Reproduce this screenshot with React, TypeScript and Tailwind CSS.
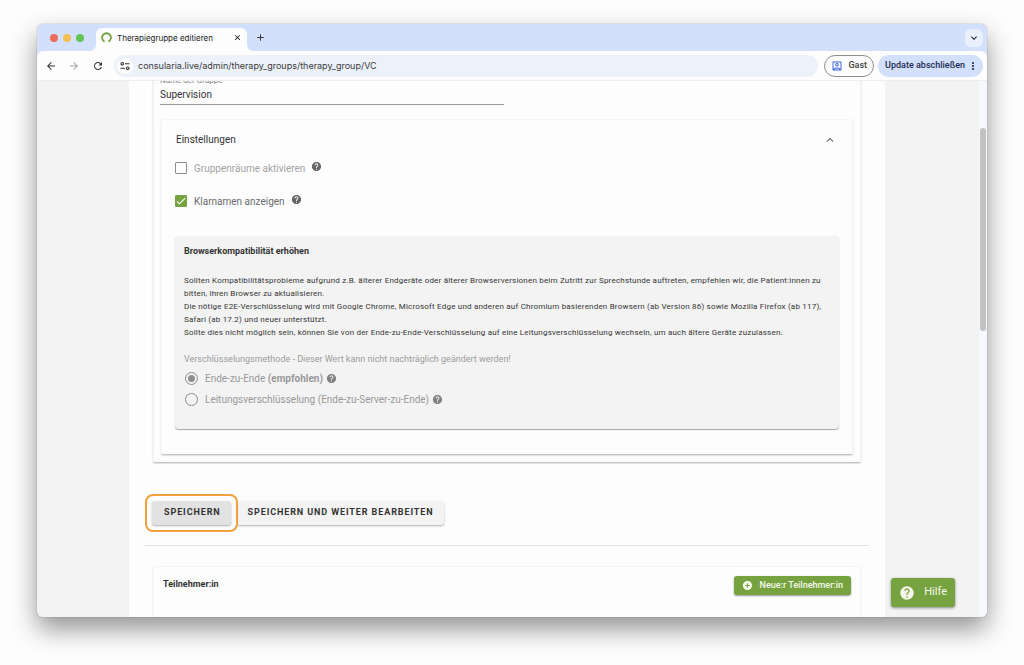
import { useState } from "react";
import {
  MdAddCircle,
  MdArrowBack,
  MdArrowForward,
  MdCheck,
  MdClose,
  MdHelp,
  MdKeyboardArrowDown,
  MdKeyboardArrowUp,
  MdMoreVert,
  MdOutlineAccountBox,
  MdAdd,
  MdRefresh,
} from "react-icons/md";

const TabStrip = () => (
  <div className="flex h-[27px] items-end bg-[#d3e0fb] pl-[13px] pr-1 font-['Inter',sans-serif]">
    <div className="flex gap-[5px] self-center">
      <span className="h-2 w-2 rounded-full bg-[#ed6a5e]"></span>
      <span className="h-2 w-2 rounded-full bg-[#f4bf4f]"></span>
      <span className="h-2 w-2 rounded-full bg-[#61c454]"></span>
    </div>

    <svg viewBox="0 0 6 6" className="ml-[6px] h-[6px] w-[6px]" fill="#fdfdfd">
      <path d="M6 0V6H0A6 6 0 0 0 6 0Z" />
    </svg>
    <div className="flex h-[23px] w-[151px] items-center rounded-t-md bg-[#fdfdfd] pl-[5px] pr-1 pb-1">
      <svg viewBox="0 0 20 20" className="h-[11px] w-[11px]" fill="none" stroke="#76a240" strokeWidth="3.4">
        <path d="M6.5 17.5A8 8 0 1 1 13.5 17.5" />
      </svg>
      <span className="ml-[5px] flex-1 truncate text-[8px] leading-3 text-[#222]">
        Therapiegruppe editieren
      </span>
      <button aria-label="Tab schließen" className="p-px">
        <MdClose className="h-[9px] w-[9px] text-[#111]" />
      </button>
    </div>
    <svg viewBox="0 0 6 6" className="h-[6px] w-[6px]" fill="#fdfdfd">
      <path d="M0 0V6H6A6 6 0 0 1 0 0Z" />
    </svg>

    <button aria-label="Neuer Tab" className="ml-[2px] self-center">
      <MdAdd className="h-[11px] w-[11px] text-[#333]" />
    </button>

    <button
      aria-label="Tabs durchsuchen"
      className="ml-auto flex h-[18px] w-[18px] items-center justify-center self-center rounded-md bg-[#eaf0fb]"
    >
      <MdKeyboardArrowDown className="h-3 w-3 text-[#222]" />
    </button>
  </div>
);

const Toolbar = () => (
  <div className="bg-[#d3e0fb]">
    <div className="flex h-[30px] items-center rounded-t-md border-b border-[#eeeeee] bg-[#fdfdfd] pl-2 pr-1">
      <button aria-label="Zurück">
        <MdArrowBack className="h-3 w-3 text-[#333]" />
      </button>
      <button aria-label="Vorwärts" className="ml-[11px]">
        <MdArrowForward className="h-3 w-3 text-[#a5a5a5]" />
      </button>
      <button aria-label="Neu laden" className="ml-3">
        <MdRefresh className="h-3 w-3 text-[#333]" />
      </button>

      <div className="ml-[10px] flex h-[22px] flex-1 items-center rounded-full bg-[#edf2fa] pl-[3px]">
        <span className="flex h-4 w-4 items-center justify-center rounded-full bg-[#fdfdfd]">
          <svg viewBox="0 0 20 20" className="h-[10px] w-[10px]" fill="none" stroke="#333" strokeWidth="2.2">
            <circle cx="4.5" cy="5.5" r="2.6" />
            <path d="M10 5.5h9M1 14.5h9" />
            <circle cx="15.5" cy="14.5" r="2.6" />
          </svg>
        </span>
        <input
          aria-label="Adresse"
          readOnly
          value="consularia.live/admin/therapy_groups/therapy_group/VC"
          className="ml-[5px] min-w-0 flex-1 bg-transparent font-['Inter',sans-serif] text-[9px] leading-4 text-[#3a3a3a] outline-none"
        />
      </div>

      <button className="ml-[6px] flex h-[22px] items-center gap-[5px] rounded-full border border-[#8e8e8e] px-[6px] text-[9px] font-medium text-[#444]">
        <MdOutlineAccountBox className="h-3 w-3 text-[#3f67d8]" />
        Gast
      </button>
      <button className="ml-1 flex h-[22px] items-center gap-[2px] rounded-full bg-[#d3e0fb] pl-[7px] pr-1 text-[9px] font-medium text-[#1c2b52]">
        Update abschließen
        <MdMoreVert className="h-3 w-3" />
      </button>
    </div>
  </div>
);

const Settings = () => {
  const [rooms, setRooms] = useState(false);
  const [realNames, setRealNames] = useState(true);
  const [method, setMethod] = useState("e2e");

  const radioClass =
    "h-[13px] w-[13px] appearance-none rounded-full border border-[#8f8f8f] bg-[#f3f3f3] checked:bg-[#8f8f8f] checked:bg-clip-content checked:p-[2px]";

  return (
    <section className="mt-[14px] rounded-sm border border-x-2 border-[#f4f5f9] border-b-[#c4c4c4] px-[13px] pb-[25px] shadow-[0_1px_1px_rgba(0,0,0,0.12)]">
      <button className="flex h-[38px] w-full items-center justify-between pl-px pr-[2px] pt-px text-[10px] text-[#333]">
        <span>Einstellungen</span>
        <MdKeyboardArrowUp className="h-3.5 w-3.5 text-[#666]" />
      </button>

      <div className="flex h-5 items-center">
        <label className="flex items-center text-[10px] text-[#a3a3a3]">
          <input
            type="checkbox"
            checked={rooms}
            onChange={(e) => setRooms(e.target.checked)}
            className="mr-[7px] h-3 w-3 appearance-none rounded-[1px] border border-[#8f8f8f] bg-[#fdfdfd]"
          />
          Gruppenräume aktivieren
        </label>
        <MdHelp className="mb-[3px] ml-[6px] h-[11px] w-[11px] text-[#666]" />
      </div>

      <div className="mt-[13px] flex h-5 items-center">
        <label className="flex items-center text-[10px] text-[#6b6b6b]">
          <span className="mr-[7px] grid h-3 w-3">
            <input
              type="checkbox"
              checked={realNames}
              onChange={(e) => setRealNames(e.target.checked)}
              className="col-start-1 row-start-1 h-3 w-3 appearance-none rounded-[1px] border border-[#76a240] checked:bg-[#76a240]"
            />
            {realNames && (
              <MdCheck className="pointer-events-none col-start-1 row-start-1 h-3 w-3 text-white" />
            )}
          </span>
          Klarnamen anzeigen
        </label>
        <MdHelp className="mb-[3px] ml-[6px] h-[11px] w-[11px] text-[#666]" />
      </div>

      <div className="mt-[25px] rounded-sm bg-[#f3f3f3] px-[9px] pb-5 pt-[7px] shadow-[0_1px_1px_rgba(0,0,0,0.35)]">
        <h3 className="text-[9px] font-bold leading-4 text-[#333]">Browserkompatibilität erhöhen</h3>

        <p className="mt-[15px] text-[8px] leading-[13px] tracking-wide text-[#333]">
          Sollten Kompatibilitätsprobleme aufgrund z.B. älterer Endgeräte oder älterer Browserversionen beim
          Zutritt zur Sprechstunde auftreten, empfehlen wir, die Patient:innen zu bitten, ihren Browser zu
          aktualisieren.
          <br />
          Die nötige E2E-Verschlüsselung wird mit Google Chrome, Microsoft Edge und anderen auf Chromium
          basierenden Browsern (ab Version 86) sowie Mozilla Firefox (ab 117), Safari (ab 17.2) und neuer
          unterstützt.
          <br />
          Sollte dies nicht möglich sein, können Sie von der Ende-zu-Ende-Verschlüsselung auf eine
          Leitungsverschlüsselung wechseln, um auch ältere Geräte zuzulassen.
        </p>

        <fieldset className="mt-3">
          <legend className="text-[9px] leading-4 text-[#9b9b9b]">
            Verschlüsselungsmethode - Dieser Wert kann nicht nachträglich geändert werden!
          </legend>
          <div className="flex h-[21px] items-center pl-px pt-[2px]">
            <label className="flex items-center gap-[7px] text-[10px] text-[#999]">
              <input
                type="radio"
                name="method"
                checked={method === "e2e"}
                onChange={() => setMethod("e2e")}
                className={radioClass}
              />
              <span>
                Ende-zu-Ende <strong className="font-bold">(empfohlen)</strong>
              </span>
            </label>
            <MdHelp className="ml-[3px] h-[11px] w-[11px] text-[#808080]" />
          </div>
          <div className="flex h-[21px] items-center pl-px pt-[2px]">
            <label className="flex items-center gap-[7px] text-[10px] text-[#999]">
              <input
                type="radio"
                name="method"
                checked={method === "server"}
                onChange={() => setMethod("server")}
                className={radioClass}
              />
              Leitungsverschlüsselung (Ende-zu-Server-zu-Ende)
            </label>
            <MdHelp className="ml-[3px] h-[11px] w-[11px] text-[#808080]" />
          </div>
        </fieldset>
      </div>
    </section>
  );
};

const GroupForm = () => (
  <form onSubmit={(e) => e.preventDefault()}>
    <div className="mx-[7px] rounded-b-sm border-x-2 border-b border-[#f2f2f2] border-b-[#c4c4c4] px-[6px] pb-[7px] shadow-[0_1px_1px_rgba(0,0,0,0.12)]">
      <div className="-mt-[6px] flex w-full max-w-[344px] flex-col">
        <label htmlFor="group-name" className="text-[8px] leading-3 text-[#808080]">
          Name der Gruppe
        </label>
        <input
          id="group-name"
          defaultValue="Supervision"
          className="h-[18px] border-b border-[#9b9b9b] bg-transparent pb-[3px] text-[10px] text-[#333] outline-none"
        />
      </div>
      <Settings />
    </div>

    <div className="mt-[38px] flex gap-[6px] px-[7px]">
      <div className="relative flex">
        <button className="h-6 rounded-[3px] bg-[#e2e2e2] pl-3 pr-[10px] text-[9px] font-bold tracking-widest text-[#333] shadow-[0_1px_2px_rgba(0,0,0,0.3)]">
          SPEICHERN
        </button>
        <span className="pointer-events-none absolute -inset-[7px] z-10 rounded-lg border-2 border-[#f0a03c]"></span>
      </div>
      <button className="h-6 rounded-[3px] bg-[#f3f3f3] pl-[11px] pr-[10px] text-[9px] font-bold tracking-widest text-[#333] shadow-[0_1px_2px_rgba(0,0,0,0.3)]">
        SPEICHERN UND WEITER BEARBEITEN
      </button>
    </div>
  </form>
);

export default function App() {
  return (
    <div className="flex h-screen flex-col overflow-hidden bg-[#fdfdfd] px-[37px] pb-12 pt-6 font-['Roboto',sans-serif]">
      <div className="relative flex min-h-0 flex-1 flex-col overflow-hidden rounded-md shadow-[0_0_1px_rgba(0,0,0,0.6),0_12px_26px_rgba(0,0,0,0.42)]">
        <TabStrip />
        <Toolbar />

        <div className="flex min-h-0 flex-1 overflow-hidden bg-[#f3f3f3]">
          <main className="ml-[92px] mr-[94px] min-w-0 flex-1 bg-[#fdfdfd] px-4">
            <GroupForm />
            <hr className="mt-5 border-[#e4e4e4]" />

            <section className="mx-[7px] mt-5 flex h-24 items-start justify-between rounded-sm border border-x-2 border-[#f4f5f9] px-[9px] pt-[9px]">
              <h2 className="text-[9px] font-bold leading-4 text-[#333]">Teilnehmer:in</h2>
              <button className="flex h-[19px] items-center gap-[7px] rounded-[3px] bg-[#76a240] px-2 text-[9px] font-medium text-[#f5faec] shadow-[0_1px_2px_rgba(0,0,0,0.4)]">
                <MdAddCircle className="h-[11px] w-[11px]" />
                Neue:r Teilnehmer:in
              </button>
            </section>
          </main>

          {/* Scrollbar */}
          <div className="w-2 bg-[#f5f8fd] pl-px pt-[47px]">
            <div className="h-[203px] w-[6px] rounded-full bg-[#c2c2c2]"></div>
          </div>
        </div>

        <button className="absolute bottom-[10px] right-8 flex h-[29px] items-center gap-[9px] rounded-[3px] bg-[#76a240] px-2 text-[11px] text-[#f5faec] shadow-[0_1px_3px_rgba(0,0,0,0.45)]">
          <MdHelp className="h-4 w-4" />
          Hilfe
        </button>
      </div>
    </div>
  );
}
